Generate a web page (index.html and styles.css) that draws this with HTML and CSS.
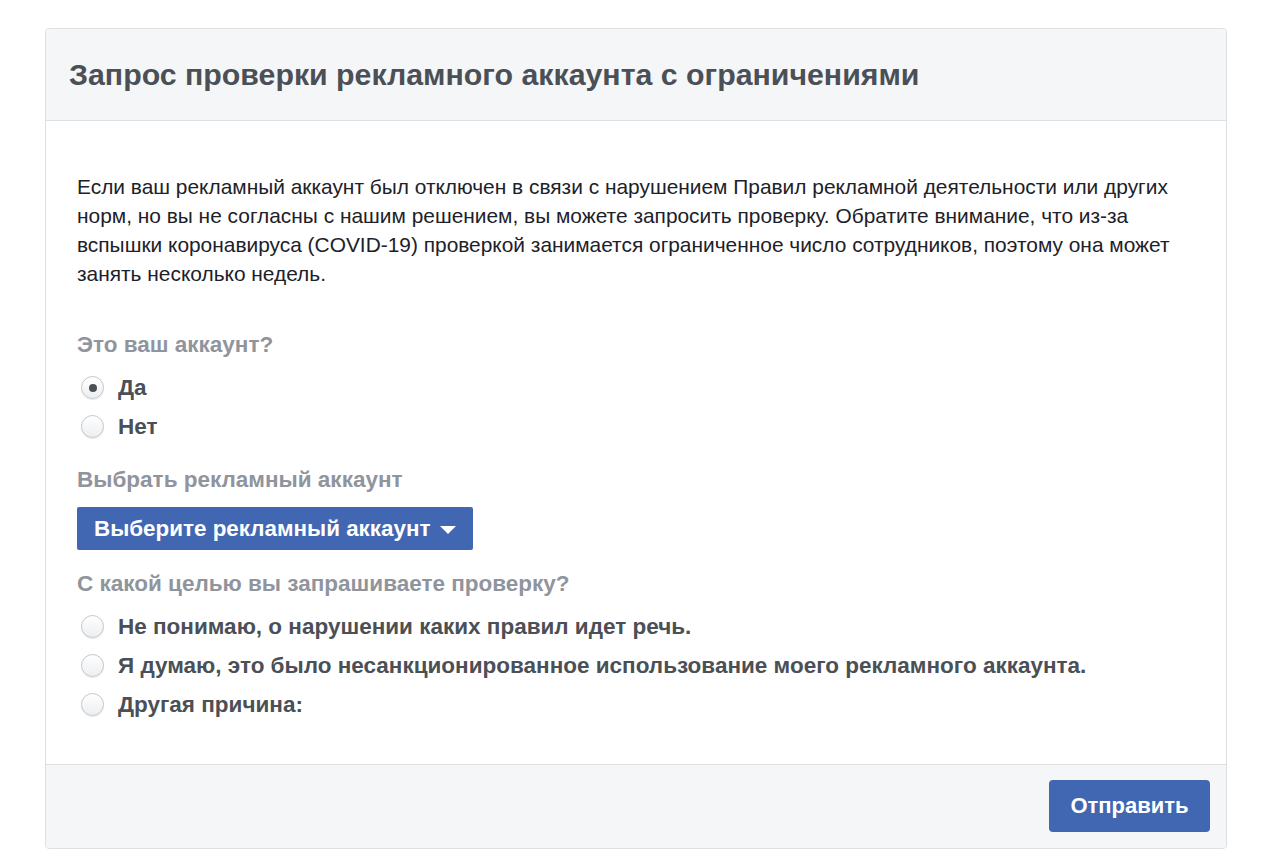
FILE: index.html
```html
<!DOCTYPE html>
<html lang="ru">
<head>
  <meta charset="UTF-8" />
  <title>Запрос проверки рекламного аккаунта</title>
  <link rel="stylesheet" href="styles.css">
</head>
<body>

  <div class="card">
    <div class="card-header">
      <h1>Запрос проверки рекламного аккаунта с ограничениями</h1>
    </div>

    <div class="card-body">
      <p class="intro">Если ваш рекламный аккаунт был отключен в связи с нарушением Правил рекламной деятельности или других норм, но вы не согласны с нашим решением, вы можете запросить проверку. Обратите внимание, что из-за вспышки коронавируса (COVID-19) проверкой занимается ограниченное число сотрудников, поэтому она может занять несколько недель.</p>

      <div class="field-label first">Это ваш аккаунт?</div>
      <label class="option"><span class="radio checked"></span>Да</label>
      <label class="option"><span class="radio"></span>Нет</label>

      <div class="field-label">Выбрать рекламный аккаунт</div>
      <button class="select-btn">Выберите рекламный аккаунт <span class="caret"></span></button>

      <div class="field-label">С какой целью вы запрашиваете проверку?</div>
      <div class="options">
        <label class="option"><span class="radio"></span>Не понимаю, о нарушении каких правил идет речь.</label>
        <label class="option"><span class="radio"></span>Я думаю, это было несанкционированное использование моего рекламного аккаунта.</label>
        <label class="option"><span class="radio"></span>Другая причина:</label>
      </div>
    </div>

    <div class="card-footer">
      <button class="send-btn">Отправить</button>
    </div>
  </div>

</body>
</html>
```

FILE: styles.css
```css
* { margin: 0; padding: 0; box-sizing: border-box; }

body {
  font-family: "Liberation Sans", Arial, sans-serif;
  background: #fff;
  color: #1d2129;
}

.card {
  width: 1182px;
  margin: 28px 0 0 45px;
  border: 1px solid #dddfe2;
  border-radius: 4px;
  overflow: hidden;
}

.card-header {
  background-color: #f5f6f7;
  border-bottom: 1px solid #dddfe2;
  height: 92px;
  display: flex;
  align-items: center;
  padding: 0 23px;
}

.card-header h1 {
  font-size: 30.3px;
  font-weight: bold;
  color: #4b4f56;
}

.card-body {
  padding: 51px 31px 40px;
}

.intro {
  font-size: 20.9px;
  line-height: 29px;
  color: #1d2129;
}

.field-label {
  font-size: 22.5px;
  font-weight: bold;
  line-height: 24px;
  color: #90949c;
  margin-top: 22px;
  margin-bottom: 11px;
}

.field-label.first { margin-top: 45px; }

.option {
  display: flex;
  align-items: center;
  height: 39px;
  font-size: 22.5px;
  font-weight: bold;
  color: #4b4f56;
}

.options { margin-top: 1px; }

.radio {
  width: 23px;
  height: 23px;
  border-radius: 50%;
  border: 1px solid #c4c6ca;
  background: linear-gradient(to bottom, #ffffff, #eceef0);
  box-shadow: 0 1px 1px rgba(0, 0, 0, 0.08);
  margin: 0 14px 0 4px;
  display: flex;
  align-items: center;
  justify-content: center;
}

.radio.checked::after {
  content: "";
  width: 8px;
  height: 8px;
  border-radius: 50%;
  background: #4b4f56;
}

.select-btn {
  display: flex;
  align-items: center;
  justify-content: flex-start;
  gap: 10px;
  width: 396px;
  height: 43px;
  margin-top: 15px;
  padding: 0 17px;
  background-color: #4267b2;
  border: none;
  border-radius: 2px;
  color: #fff;
  font-family: inherit;
  font-size: 22.4px;
  font-weight: bold;
  white-space: nowrap;
}

.caret {
  width: 0;
  height: 0;
  border-left: 8px solid transparent;
  border-right: 8px solid transparent;
  border-top: 8px solid #fff;
  margin-top: 2px;
}

.card-footer {
  background-color: #f5f6f7;
  border-top: 1px solid #dddfe2;
  display: flex;
  justify-content: flex-end;
  padding: 15px 16px 16px;
}

.send-btn {
  width: 161px;
  height: 52px;
  background-color: #4267b2;
  border: none;
  border-radius: 4px;
  color: #fff;
  font-family: inherit;
  font-size: 22px;
  font-weight: bold;
}
```
